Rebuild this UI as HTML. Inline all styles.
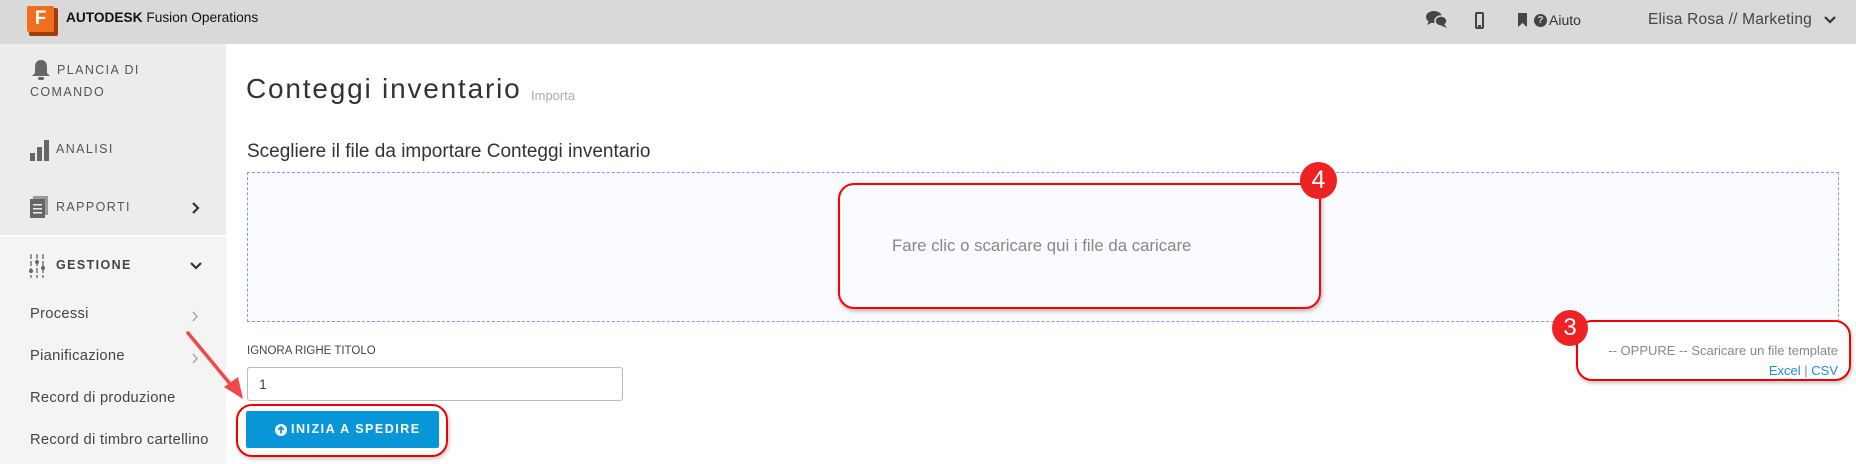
<!DOCTYPE html>
<html><head><meta charset="utf-8"><style>
*{margin:0;padding:0;box-sizing:border-box}
body{width:1856px;height:464px;overflow:hidden;background:#fff;font-family:"Liberation Sans",sans-serif;position:relative}
.a{position:absolute;white-space:nowrap}
#hdr{position:absolute;left:0;top:0;width:1856px;height:44px;background:#d9d9d9}
#side{position:absolute;left:0;top:44px;width:226px;height:420px;background:#f4f4f4}
#side1{position:absolute;left:0;top:44px;width:226px;height:193px;background:#ececec;border-bottom:2px solid #fff}
.cap{font-size:12.5px;letter-spacing:1.4px;color:#555}
.sub{font-size:14.7px;color:#444;letter-spacing:.3px}
</style></head><body>
<div id="hdr"></div>
<div id="side"></div><div id="side1"></div>
<!-- logo -->
<div class="a" style="left:29px;top:8px;width:29px;height:28px;background:#a33d0c;border-radius:2px"></div>
<div class="a" style="left:27px;top:6px;width:27px;height:26px;background:#f26e1f;border-radius:2px;color:#fff;font-weight:bold;font-size:19px;line-height:26px;text-align:center">F</div>
<div class="a" style="left:66px;top:10px;font-size:13.7px;color:#111"><b>AUTODESK</b> Fusion Operations</div>
<!-- header right -->
<svg class="a" style="left:1426px;top:10px" width="22" height="20" viewBox="0 0 22 20"><ellipse cx="8" cy="7" rx="8" ry="6" fill="#444"/><path d="M3 11 L1 15 L7 12Z" fill="#444"/><ellipse cx="15" cy="11" rx="6" ry="5" fill="#444" stroke="#d9d9d9" stroke-width="1.5"/><path d="M18 14 L21 18 L14 15Z" fill="#444"/></svg>
<div class="a" style="left:1475px;top:12px;width:9px;height:17px;border:2px solid #444;border-radius:2px"></div>
<div class="a" style="left:1478px;top:25px;width:3px;height:2px;background:#444"></div>
<svg class="a" style="left:1518px;top:13px" width="9" height="14"><path d="M0 0H9V14L4.5 10L0 14Z" fill="#444"/></svg>
<div class="a" style="left:1534px;top:14px;width:13px;height:13px;border-radius:50%;background:#444;color:#d9d9d9;font-size:10px;font-weight:bold;text-align:center;line-height:13px">?</div>
<div class="a" style="left:1549px;top:12px;font-size:14px;color:#333">Aiuto</div>
<div class="a" style="left:1648px;top:11px;font-size:15.5px;color:#444;letter-spacing:.2px">Elisa Rosa // Marketing</div>
<svg class="a" style="left:1824px;top:16px" width="12" height="9"><path d="M1 1L6 6L11 1" stroke="#333" stroke-width="2.2" fill="none"/></svg>
<!-- sidebar -->
<svg class="a" style="left:31px;top:59px" width="20" height="22"><path d="M10 1C6 1 4 4 4 8V14L1 17H19L16 14V8C16 4 14 1 10 1Z" fill="#666"/><rect x="7" y="18" width="6" height="3" rx="1.5" fill="#666"/></svg>
<div class="a cap" style="left:57px;top:63px">PLANCIA DI</div>
<div class="a cap" style="left:30px;top:85px">COMANDO</div>
<svg class="a" style="left:30px;top:139px" width="20" height="22"><rect x="0" y="14" width="5" height="8" fill="#666"/><rect x="7" y="8" width="5" height="14" fill="#666"/><rect x="14" y="1" width="5" height="21" fill="#666"/></svg>
<div class="a cap" style="left:56px;top:142px">ANALISI</div>
<svg class="a" style="left:30px;top:196px" width="18" height="22"><rect x="3" y="0" width="15" height="19" fill="#999"/><rect x="0" y="3" width="15" height="19" fill="#666"/><rect x="3" y="8" width="9" height="1.5" fill="#eee"/><rect x="3" y="12" width="9" height="1.5" fill="#eee"/><rect x="3" y="16" width="9" height="1.5" fill="#eee"/></svg>
<div class="a cap" style="left:56px;top:200px">RAPPORTI</div>
<svg class="a" style="left:192px;top:202px" width="8" height="12"><path d="M1 1L6 6L1 11" stroke="#333" stroke-width="2.2" fill="none"/></svg>
<svg class="a" style="left:29px;top:254px" width="16" height="24"><g stroke="#777" stroke-width="1.5"><path d="M2 0V24M8 0V24M14 0V24" stroke-dasharray="5 2"/></g><circle cx="2" cy="17" r="2" fill="#666"/><circle cx="8" cy="8" r="2" fill="#666"/><circle cx="14" cy="14" r="2" fill="#666"/></svg>
<div class="a cap" style="left:56px;top:258px;font-weight:bold;color:#444">GESTIONE</div>
<svg class="a" style="left:190px;top:262px" width="12" height="9"><path d="M1 1L6 6L11 1" stroke="#333" stroke-width="2.2" fill="none"/></svg>
<div class="a sub" style="left:30px;top:306px">Processi</div>
<svg class="a" style="left:192px;top:311px" width="7" height="11"><path d="M1 1L5 5.5L1 10" stroke="#aaa" stroke-width="1.5" fill="none"/></svg>
<div class="a sub" style="left:30px;top:348px">Pianificazione</div>
<svg class="a" style="left:192px;top:353px" width="7" height="11"><path d="M1 1L5 5.5L1 10" stroke="#aaa" stroke-width="1.5" fill="none"/></svg>
<div class="a sub" style="left:30px;top:390px">Record di produzione</div>
<div class="a sub" style="left:30px;top:432px">Record di timbro cartellino</div>
<!-- main -->
<div class="a" style="left:246px;top:73px;font-size:28px;color:#333;letter-spacing:1.8px">Conteggi inventario</div>
<div class="a" style="left:531px;top:88px;font-size:13px;color:#aaa">Importa</div>
<div class="a" style="left:247px;top:141px;font-size:19px;color:#333">Scegliere il file da importare Conteggi inventario</div>
<div class="a" style="left:247px;top:172px;width:1592px;height:150px;border:1px dashed #7a9ee8;background:#f9fbfe"></div>
<div class="a" style="left:892px;top:236px;font-size:16.8px;color:#888">Fare clic o scaricare qui i file da caricare</div>
<div class="a" style="left:838px;top:183px;width:483px;height:126px;border:2px solid #f00;border-radius:16px;box-shadow:1px 2px 4px rgba(0,0,0,.3)"></div>
<div class="a" style="left:1300px;top:162px;width:37px;height:37px;border-radius:50%;background:#ee2222;color:#fff;font-size:25px;text-align:center;line-height:37px">4</div>
<div class="a" style="left:247px;top:345px;font-size:11.5px;color:#444">IGNORA RIGHE TITOLO</div>
<div class="a" style="left:247px;top:367px;width:376px;height:34px;border:1px solid #bbb;border-radius:3px;font-size:14px;color:#444;padding:8px 0 0 11px">1</div>
<div class="a" style="left:236px;top:404px;width:212px;height:53px;border:2px solid #e00;border-radius:16px;box-shadow:1px 2px 4px rgba(0,0,0,.25)"></div>
<div class="a" style="left:246px;top:411px;width:193px;height:37px;background:#0896d8;border-radius:2px"></div>
<svg class="a" style="left:275px;top:424px" width="12" height="12"><circle cx="6" cy="6" r="6" fill="#fff"/><path d="M6 9.5V3M3.3 5.7L6 3L8.7 5.7" stroke="#0896d8" stroke-width="1.8" fill="none"/></svg>
<div class="a" style="left:291px;top:422px;color:#fff;font-size:12.5px;font-weight:bold;letter-spacing:1.5px">INIZIA A SPEDIRE</div>
<svg class="a" style="left:180px;top:325px" width="70" height="80"><line x1="8" y1="8" x2="56" y2="66" stroke="#f04848" stroke-width="3.5" stroke-linecap="round"/><path d="M63 74L44 62L58 52Z" fill="#f04848"/></svg>
<div class="a" style="left:1576px;top:320px;width:275px;height:61px;border:2px solid #e00;border-radius:16px;box-shadow:1px 2px 4px rgba(0,0,0,.25)"></div>
<div class="a" style="left:1552px;top:310px;width:36px;height:36px;border-radius:50%;background:#ee2222;color:#fff;font-size:24px;text-align:center;line-height:36px">3</div>
<div class="a" style="right:18px;top:343px;font-size:13px;color:#888">-- OPPURE -- Scaricare un file template</div>
<div class="a" style="right:18px;top:363px;font-size:13px;color:#1a8fd8">Excel <span style="color:#888">|</span> CSV</div>
</body></html>
